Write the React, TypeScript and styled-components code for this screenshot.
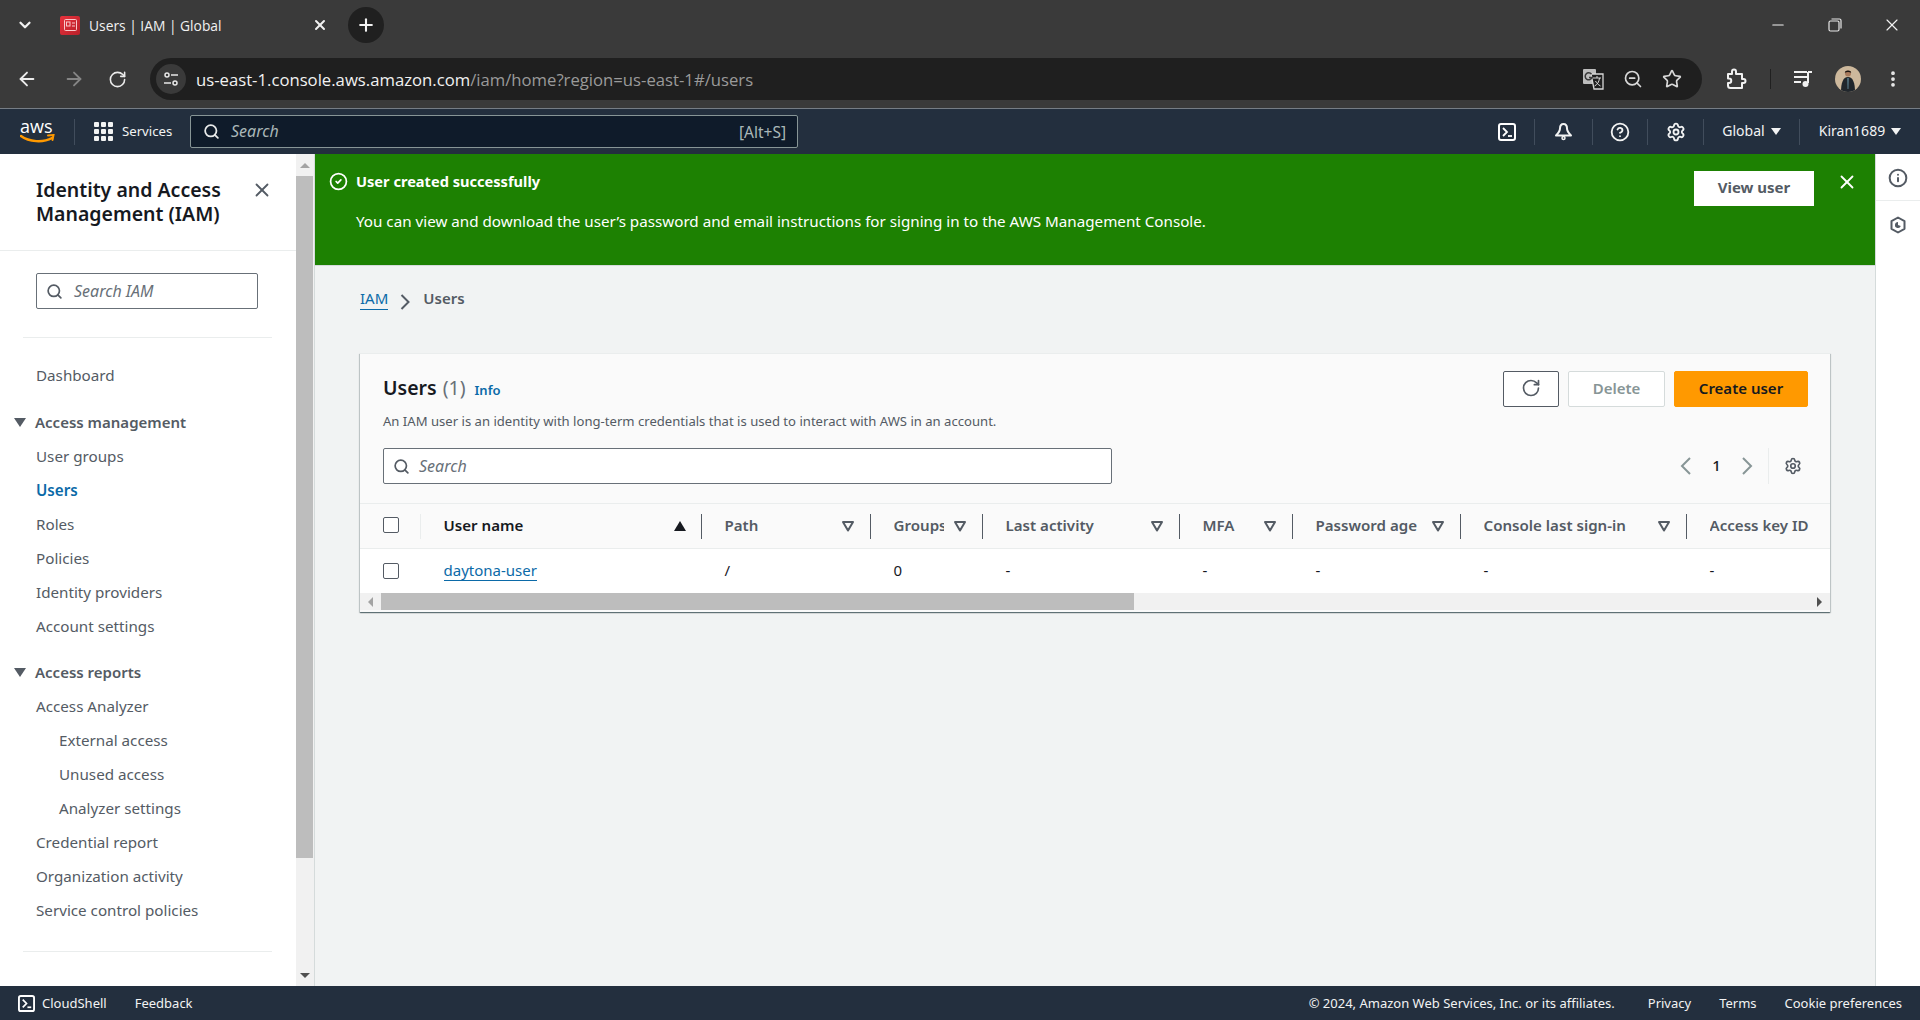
import styled, { createGlobalStyle } from 'styled-components';
import {
  ArrowLeft,
  ArrowRight,
  ChevronDown,
  CircleCheck,
  CircleHelp,
  Info,
  Minus,
  MoreVertical,
  Plus,
  RotateCw,
  Search,
  Settings,
  Star,
  X,
  ZoomOut,
} from 'lucide-react';

const GlobalStyle = createGlobalStyle`
  html, body {
    margin: 0;
    padding: 0;
    height: 100%;
    overflow: hidden;
  }
  #root {
    height: 100%;
  }
  * {
    box-sizing: border-box;
  }
`;

const uiFont = `"Noto Sans", "Open Sans", Arial, sans-serif`;
const chromeFont = `"Open Sans", "Noto Sans", Arial, sans-serif`;

const AppContainer = styled.div`
  display: flex;
  flex-direction: column;
  width: 1920px;
  height: 1020px;
  overflow: hidden;
  background: #f1f3f3;
  font-family: ${uiFont};
  color: #16191f;
`;

/* browser chrome */
const TabStrip = styled.div`
  display: flex;
  align-items: center;
  height: 54px;
  padding-bottom: 4px;
  background: #3a3a3a;
  color: #f1f1f1;
  font-family: ${chromeFont};
`;

const TabListButton = styled.div`
  width: 50px;
  display: flex;
  justify-content: center;
`;

const Favicon = styled.div`
  width: 20px;
  height: 19px;
  margin-left: 10px;
  border-radius: 2px;
  background: linear-gradient(135deg, #e7323c, #b8202a);
  display: flex;
  align-items: center;
  justify-content: center;
`;

const TabTitle = styled.div`
  width: 223px;
  margin-left: 9px;
  font-size: 13.8px;
  white-space: nowrap;
`;

const NewTabButton = styled.div`
  width: 36px;
  height: 36px;
  margin-left: 20px;
  border-radius: 50%;
  background: #202020;
  display: flex;
  align-items: center;
  justify-content: center;
`;

const WindowControls = styled.div`
  margin-left: auto;
  display: flex;
  align-items: center;
`;

const WindowButton = styled.div`
  width: 57px;
  display: flex;
  justify-content: center;
`;

const BrowserToolbar = styled.div`
  display: flex;
  align-items: center;
  height: 55px;
  padding-bottom: 4px;
  background: #3a3a3a;
  border-bottom: 1px solid #767d85;
  color: #e8e8e8;
`;

const ToolbarButton = styled.div<{ $w: number; $dim?: boolean }>`
  width: ${(p) => p.$w}px;
  display: flex;
  justify-content: center;
  align-items: center;
  color: ${(p) => (p.$dim ? '#858585' : '#ececec')};
`;

const AddressBar = styled.div`
  width: 1552px;
  height: 42px;
  margin-left: 9px;
  padding: 0 20px 0 6px;
  border-radius: 21px;
  background: #1f1f1f;
  display: flex;
  align-items: center;
  font-family: ${chromeFont};
`;

const SiteButton = styled.div`
  width: 30px;
  height: 30px;
  border-radius: 50%;
  background: #3a3a3a;
  display: flex;
  align-items: center;
  justify-content: center;
`;

const Url = styled.div`
  margin-left: 10px;
  flex: 1;
  font-size: 16.7px;
  color: #f1f1f1;
  white-space: nowrap;
  span {
    color: #9a9a9a;
  }
`;

const AddressIcons = styled.div`
  display: flex;
  align-items: center;
  gap: 19px;
  color: #d8d8d8;
`;

const ToolbarDivider = styled.div`
  width: 1px;
  height: 20px;
  margin-right: 22px;
  background: #202020;
`;

/* aws top nav */
const TopNav = styled.div`
  display: flex;
  align-items: center;
  height: 45px;
  background: #232f3e;
  color: #f2f3f3;
`;

const LogoSlot = styled.div`
  width: 75px;
  height: 26px;
  border-right: 1px solid #414d5c;
  padding-left: 20px;
  display: flex;
  flex-direction: column;
  align-items: flex-start;
`;

const LogoText = styled.div`
  font-family: ${chromeFont};
  font-size: 18px;
  line-height: 15px;
  color: #fff;
`;

const ServicesButton = styled.div`
  width: 115px;
  padding-left: 19px;
  display: flex;
  align-items: center;
  gap: 9px;
  font-size: 13.2px;
`;

const ServicesLabel = styled.span`
  padding-bottom: 2px;
`;

const GridIcon = styled.div`
  display: grid;
  grid-template-columns: repeat(3, 5px);
  grid-auto-rows: 5px;
  gap: 2px;
  i {
    background: #f2f3f3;
    border-radius: 1px;
  }
`;

const NavSearch = styled.div`
  width: 608px;
  height: 33px;
  padding: 0 11px 0 12px;
  border: 1px solid #879596;
  border-radius: 2px;
  background: #0f1b2a;
  display: flex;
  align-items: center;
  gap: 11px;
  font-size: 16px;
  color: #aab7b8;
`;

const NavSearchHint = styled.span`
  margin-left: auto;
  font-size: 15.5px;
`;

const NavSearchPlaceholder = styled.span`
  padding-bottom: 2px;
  font-style: italic;
`;

const NavCells = styled.div`
  margin-left: auto;
  display: flex;
  align-items: center;
`;

const NavCell = styled.div<{ $w: number; $first?: boolean }>`
  width: ${(p) => p.$w}px;
  height: 26px;
  border-left: ${(p) => (p.$first ? 'none' : '1px solid #414d5c')};
  display: flex;
  align-items: center;
  justify-content: center;
  gap: 6px;
  font-size: 14px;
  color: #f2f3f3;
`;

const NavLabel = styled.span`
  padding-bottom: 2px;
`;

const Caret = styled.i`
  width: 0;
  height: 0;
  border-left: 5px solid transparent;
  border-right: 5px solid transparent;
  border-top: 7px solid #f2f3f3;
`;

/* body */
const Body = styled.div`
  display: flex;
  flex: 1;
  min-height: 0;
`;

const SidePanel = styled.div`
  width: 296px;
  background: #fff;
  display: flex;
  flex-direction: column;
`;

const SideHeader = styled.div`
  height: 97px;
  padding: 24px 23px 0 36px;
  border-bottom: 1px solid #eaeded;
  display: flex;
  justify-content: space-between;
  align-items: flex-start;
`;

const SideTitle = styled.div`
  width: 200px;
  font-size: 19.5px;
  line-height: 24px;
  font-weight: 600;
`;

const SideClose = styled.div`
  margin-top: 1px;
  color: #545b64;
`;

const SideSearchWrap = styled.div`
  padding: 22px 38px 28px 36px;
`;

const SearchField = styled.div<{ $w?: number; $gap: number; $pad: number }>`
  width: ${(p) => (p.$w ? `${p.$w}px` : '100%')};
  height: 36px;
  padding-left: ${(p) => p.$pad}px;
  border: 1px solid #687078;
  border-radius: 2px;
  background: #fff;
  display: flex;
  align-items: center;
  gap: ${(p) => p.$gap}px;
  font-size: 16px;
  font-style: italic;
  color: #687078;
`;

const SideDivider = styled.div<{ $mt?: number }>`
  height: 1px;
  margin: ${(p) => p.$mt ?? 0}px 24px 0 23px;
  background: #eaeded;
`;

const SideNav = styled.div`
  padding-top: 20px;
`;

const SideItem = styled.div<{ $indent?: boolean; $active?: boolean }>`
  height: 34px;
  padding-left: ${(p) => (p.$indent ? 59 : 36)}px;
  display: flex;
  align-items: center;
  font-size: 15.2px;
  font-weight: ${(p) => (p.$active ? 600 : 400)};
  color: ${(p) => (p.$active ? '#0b6aa8' : '#545b64')};
  white-space: nowrap;
`;

const SideGroup = styled.div<{ $mt: number }>`
  height: 34px;
  margin-top: ${(p) => p.$mt}px;
  padding-left: 14px;
  display: flex;
  align-items: center;
  gap: 9px;
  font-size: 15px;
  font-weight: 600;
  color: #545b64;
`;

const GroupCaret = styled.i`
  width: 0;
  height: 0;
  border-left: 6px solid transparent;
  border-right: 6px solid transparent;
  border-top: 9px solid #545b64;
`;

const ScrollColumn = styled.div`
  width: 19px;
  background: #f1f1f1;
  border-right: 1px solid #d5dbdb;
  display: flex;
  flex-direction: column;
`;

const ScrollArrow = styled.div<{ $h: number; $down?: boolean }>`
  height: ${(p) => p.$h}px;
  display: flex;
  justify-content: center;
  align-items: center;
  &::after {
    content: '';
    width: 0;
    height: 0;
    border-left: 5px solid transparent;
    border-right: 5px solid transparent;
    ${(p) => (p.$down ? 'border-top: 5px solid #505050;' : 'border-bottom: 5px solid #a3a3a3;')}
  }
`;

const ScrollThumb = styled.div`
  height: 682px;
  margin-right: 1px;
  background: #bdbdbd;
`;

const ScrollRest = styled.div`
  flex: 1;
`;

const Main = styled.div`
  width: 1560px;
  display: flex;
  flex-direction: column;
`;

const FlashBar = styled.div`
  height: 112px;
  padding: 14px 17px 0 14px;
  background: #1d8102;
  color: #fff;
  display: flex;
  align-items: flex-start;
  border-bottom: 1px solid #d5dbdb;
`;

const FlashIcon = styled.div`
  width: 27px;
  padding-top: 4px;
`;

const FlashText = styled.div`
  flex: 1;
  font-size: 15.2px;
`;

const FlashTitle = styled.div`
  font-size: 14.6px;
  font-weight: 700;
  line-height: 26px;
`;

const FlashMessage = styled.div`
  margin-top: 15px;
  line-height: 25px;
`;

const FlashButton = styled.div`
  width: 120px;
  height: 35px;
  margin-top: 3px;
  padding-bottom: 4px;
  background: #fff;
  color: #545b64;
  font-size: 15px;
  font-weight: 700;
  display: flex;
  align-items: center;
  justify-content: center;
`;

const FlashClose = styled.div`
  width: 44px;
  display: flex;
  justify-content: flex-end;
  padding-top: 3px;
`;

const Breadcrumbs = styled.div`
  height: 87px;
  padding: 18px 0 0 45px;
  display: flex;
  align-items: flex-start;
  font-size: 15px;
  line-height: 28px;
`;

const CrumbLink = styled.a`
  color: #0b6aa8;
  line-height: 22px;
  margin-top: 3px;
  border-bottom: 1px solid #0b6aa8;
`;

const CrumbChevron = styled.div`
  width: 35px;
  padding: 6px 0 0 12px;
`;

const CrumbCurrent = styled.span`
  color: #545b64;
  font-weight: 600;
`;

const Card = styled.div`
  width: 1470px;
  height: 259px;
  margin-left: 45px;
  background: #fafafa;
  border-top: 1px solid #eaeded;
  box-shadow: 0 1px 1px 0 rgba(0, 28, 36, 0.45), 1px 1px 1px 0 rgba(0, 28, 36, 0.15),
    -1px 1px 1px 0 rgba(0, 28, 36, 0.15);
  display: flex;
  flex-direction: column;
`;

const CardTop = styled.div`
  height: 149px;
  padding: 17px 22px 0 23px;
  display: grid;
  grid-template-columns: 1fr auto;
  grid-template-rows: 77px 36px;
`;

const CardHeading = styled.div`
  display: flex;
  flex-direction: column;
`;

const TitleRow = styled.div`
  display: flex;
  align-items: baseline;
  height: 34px;
  font-size: 19.5px;
  line-height: 34px;
`;

const TitleText = styled.span`
  font-weight: 600;
`;

const TitleCount = styled.span`
  margin-left: 6px;
  color: #687078;
`;

const InfoLink = styled.a`
  margin-left: 9px;
  font-size: 13px;
  font-weight: 600;
  color: #0b6aa8;
`;

const CardDescription = styled.div`
  margin-top: 6px;
  font-size: 13.1px;
  line-height: 20px;
  color: #545b64;
`;

const Actions = styled.div`
  display: flex;
  gap: 9px;
  align-items: flex-start;
`;

const ActionButton = styled.div<{ $w: number; $kind: 'normal' | 'disabled' | 'primary' }>`
  width: ${(p) => p.$w}px;
  height: 36px;
  padding-bottom: 2px;
  border-radius: 2px;
  display: flex;
  align-items: center;
  justify-content: center;
  font-size: 15px;
  font-weight: 600;
  border: 1px solid
    ${(p) => (p.$kind === 'normal' ? '#545b64' : p.$kind === 'disabled' ? '#d5dbdb' : '#ff9900')};
  background: ${(p) => (p.$kind === 'primary' ? '#ff9900' : '#fff')};
  color: ${(p) => (p.$kind === 'disabled' ? '#879596' : p.$kind === 'primary' ? '#16191f' : '#545b64')};
`;

const Pager = styled.div`
  display: flex;
  align-items: center;
  justify-content: flex-end;
  height: 36px;
  padding-right: 6px;
`;

const PagerNumber = styled.div`
  width: 49px;
  padding-bottom: 2px;
  text-align: center;
  font-size: 15px;
  font-weight: 500;
`;

const PagerGear = styled.div`
  margin-left: 15px;
  height: 36px;
  padding-left: 15px;
  border-left: 1px solid #eaeded;
  display: flex;
  align-items: center;
  color: #545b64;
`;

const Row = styled.div<{ $head?: boolean }>`
  display: grid;
  grid-template-columns: 61px 281px 169px 112px 197px 113px 168px 226px 143px;
  height: ${(p) => (p.$head ? 46 : 44)}px;
  align-items: center;
  background: ${(p) => (p.$head ? '#fafafa' : '#fff')};
  border-top: ${(p) => (p.$head ? '1px solid #eaeded' : 'none')};
  border-bottom: ${(p) => (p.$head ? '1px solid #eaeded' : 'none')};
`;

const CheckCell = styled.div<{ $head?: boolean }>`
  height: 25px;
  padding: ${(p) => (p.$head ? '0 0 2px 23px' : '0 0 0 23px')};
  display: flex;
  align-items: center;
  border-right: ${(p) => (p.$head ? '1px solid #eaeded' : 'none')};
`;

const Check = styled.div`
  width: 16px;
  height: 16px;
  border: 1px solid #545b64;
  border-radius: 2px;
  background: #fff;
`;

const HeadCell = styled.div<{ $last?: boolean; $sorted?: boolean }>`
  height: 25px;
  padding: 0 15px 0 22.5px;
  display: flex;
  align-items: center;
  gap: 9px;
  font-size: 15.1px;
  font-weight: 600;
  color: ${(p) => (p.$sorted ? '#16191f' : '#545b64')};
  border-right: ${(p) => (p.$last ? 'none' : '1px solid #545b64')};
`;

const HeadLabel = styled.div`
  flex: 1;
  min-width: 0;
  padding-bottom: 3px;
  overflow: hidden;
  white-space: nowrap;
`;

const BodyCell = styled.div`
  padding: 0 0 2px 22.5px;
  font-size: 15px;
  color: #16191f;
`;

const UserLink = styled.a`
  color: #0b6aa8;
  border-bottom: 1px solid #0b6aa8;
`;

const HScroll = styled.div`
  height: 17px;
  background: #f1f1f1;
  display: grid;
  grid-template-columns: 21px 753px 1fr 21px;
`;

const HArrow = styled.div<{ $right?: boolean }>`
  display: flex;
  align-items: center;
  justify-content: center;
  &::after {
    content: '';
    width: 0;
    height: 0;
    border-top: 5px solid transparent;
    border-bottom: 5px solid transparent;
    ${(p) => (p.$right ? 'border-left: 5px solid #505050;' : 'border-right: 5px solid #a3a3a3;')}
  }
`;

const HThumb = styled.div`
  background: #bdbdbd;
`;

const Rail = styled.div`
  width: 45px;
  background: #fff;
  border-left: 1px solid #d5dbdb;
  display: flex;
  flex-direction: column;
  color: #545b64;
`;

const RailItem = styled.div<{ $line?: boolean }>`
  height: 47px;
  padding-top: ${(p) => (p.$line ? 2 : 0)}px;
  display: flex;
  align-items: center;
  justify-content: center;
  border-bottom: ${(p) => (p.$line ? '1px solid #eaeded' : 'none')};
`;

const Footer = styled.div`
  height: 34px;
  padding: 0 18px;
  background: #232f3e;
  color: #f2f3f3;
  font-size: 13px;
  display: flex;
  align-items: center;
`;

const FooterShell = styled.div`
  display: flex;
  align-items: center;
  gap: 7px;
`;

const FooterFeedback = styled.div`
  margin-left: 28px;
`;

const FooterLinks = styled.div`
  margin-left: auto;
  display: flex;
  gap: 28px;
`;

const Copyright = styled.div`
  margin-right: 5px;
`;

const ShellIcon = ({ size }: { size: number }) => (
  <svg width={size} height={size} viewBox="0 0 18 18" fill="none">
    <rect x="1" y="1" width="16" height="16" rx="2" stroke="#fff" strokeWidth="2" />
    <path d="M5 5l4 4-4 4" stroke="#fff" strokeWidth="1.8" />
    <path d="M10 13h4" stroke="#fff" strokeWidth="1.8" />
  </svg>
);

const BellIcon = () => (
  <svg width="19" height="19" viewBox="0 0 19 19" fill="none" stroke="#f2f3f3" strokeWidth="2">
    <path d="M9.5 2C7 2 6 4 6 6.500 6 9 4 11.500 2 13.500h15c-2-2-4-4.500-4-7C13 4 12 2 9.500 2z" strokeLinejoin="round" />
    <circle cx="9.500" cy="16" r="1.500" strokeWidth="1.500" />
  </svg>
);

const FilterCaret = () => (
  <svg width="14" height="12" viewBox="0 0 14 12" fill="none">
    <path d="M2 2h10L7 10.5z" stroke="#545b64" strokeWidth="2" strokeLinejoin="round" />
  </svg>
);

const SortCaret = () => (
  <svg width="12" height="10" viewBox="0 0 12 10">
    <path d="M6 0l6 10H0z" fill="#16191f" />
  </svg>
);

const PagerChevron = ({ right }: { right?: boolean }) => (
  <svg width="12" height="18" viewBox="0 0 12 18" fill="none">
    <path d={right ? 'M2 1l8 8-8 8' : 'M10 1L2 9l8 8'} stroke="#879596" strokeWidth="2" />
  </svg>
);

const Avatar = () => (
  <svg width="26" height="26" viewBox="0 0 26 26">
    <defs>
      <clipPath id="avatar-clip">
        <circle cx="13" cy="13" r="13" />
      </clipPath>
    </defs>
    <g clipPath="url(#avatar-clip)">
      <rect width="26" height="26" fill="#cdb89c" />
      <path d="M6 26c0-9 2-15 7-15s7 6 7 15z" fill="#20262c" />
      <path d="M12 12h2l-.4 11h-1.200z" fill="#4c6a78" />
      <circle cx="13" cy="7.500" r="3" fill="#a87a5c" />
      <path d="M9.800 6.800c0-3 6.400-3 6.400 0-2-1-4.400-1-6.400 0z" fill="#1a1512" />
    </g>
  </svg>
);

const PuzzleIcon = () => (
  <svg width="22" height="22" viewBox="0 0 22 22" fill="none">
    <path
      d="M3 6h4V3.500a2 2 0 0 1 4 0V6h6v5h1.500a2 2 0 0 1 0 4H17v5H5.500C4.100 20 3 19 3 17.500V15h1a2.200 2.200 0 0 0 0-4.500H3z"
      stroke="#f1f1f1"
      strokeWidth="2"
      strokeLinejoin="round"
    />
  </svg>
);

const MediaIcon = () => (
  <svg width="20" height="20" viewBox="0 0 20 20" fill="none">
    <path d="M1 3h13M1 8h13M1 13h7" stroke="#f1f1f1" strokeWidth="2" />
    <path d="M15 3v11" stroke="#f1f1f1" strokeWidth="2" />
    <path d="M15 3h4" stroke="#f1f1f1" strokeWidth="2" />
    <circle cx="12.500" cy="15" r="3" fill="#f1f1f1" />
  </svg>
);

const TranslateIcon = () => (
  <svg width="22" height="22" viewBox="0 0 22 22" fill="none">
    <rect x="1" y="1" width="13" height="15" rx="1" fill="#bdbdbd" />
    <path d="M9 6h12v15H12z" fill="#1f1f1f" stroke="#d8d8d8" strokeWidth="1.300" />
    <path d="M11 10h8M15 8v2M12.500 18c3-1.500 4.500-4 5-8M13.500 13c1 2 2.500 3.500 5 5" stroke="#d8d8d8" strokeWidth="1" />
    <path d="M9.500 6.200a3.500 3.500 0 1 0 .5 3.300H7" stroke="#3a3a3a" strokeWidth="1.500" />
  </svg>
);

const TuneIcon = () => (
  <svg width="16" height="16" viewBox="0 0 16 16" fill="none" stroke="#e8e8e8" strokeWidth="1.500">
    <circle cx="4" cy="4" r="2" />
    <path d="M8 4h7M1 12h7" />
    <circle cx="12" cy="12" r="2" />
  </svg>
);

const RestoreIcon = () => (
  <svg width="14" height="14" viewBox="0 0 14 14" fill="none" stroke="#e8e8e8" strokeWidth="1.200">
    <rect x="1" y="3" width="10" height="10" rx="1.500" />
    <path d="M3.500 1h8A1.500 1.500 0 0 1 13 2.500v8" />
  </svg>
);

const HexIcon = () => (
  <svg width="18" height="18" viewBox="0 0 18 18" fill="none">
    <path d="M9 1.500l6.500 3.700v7.600L9 16.500l-6.500-3.700V5.200z" stroke="#545b64" strokeWidth="2" strokeLinejoin="round" />
    <path d="M9 6a3 3 0 1 0 2.800 4L9 9z" fill="#545b64" />
  </svg>
);

const AwsSmile = () => (
  <svg width="36" height="11" viewBox="0 0 36 11" fill="none">
    <path d="M1 2c8 6 22 7 31 2" stroke="#ff9900" strokeWidth="2.400" strokeLinecap="round" />
    <path d="M28 1.500l5.500-.5-1 5" stroke="#ff9900" strokeWidth="2" strokeLinecap="round" />
  </svg>
);

const columns = ['Path', 'Groups', 'Last activity', 'MFA', 'Password age', 'Console last sign-in'];
const cells = ['/', '0', '-', '-', '-', '-', '-'];

const App = () => {
  return (
    <AppContainer>
      <GlobalStyle />
      <TabStrip>
        <TabListButton>
          <ChevronDown size={18} strokeWidth={3} />
        </TabListButton>
        <Favicon>
          <svg width="13" height="12" viewBox="0 0 13 12" fill="none" stroke="#f8c9cc" strokeWidth="1">
            <rect x="0.500" y="0.500" width="12" height="11" rx="1" />
            <rect x="2.500" y="3" width="3.500" height="4" />
            <path d="M8 4h3M8 7h3" />
          </svg>
        </Favicon>
        <TabTitle>Users | IAM | Global</TabTitle>
        <X size={16} strokeWidth={3} />
        <NewTabButton>
          <Plus size={20} strokeWidth={2.5} />
        </NewTabButton>
        <WindowControls>
          <WindowButton>
            <Minus size={18} strokeWidth={1.4} />
          </WindowButton>
          <WindowButton>
            <RestoreIcon />
          </WindowButton>
          <WindowButton>
            <X size={20} strokeWidth={1.4} />
          </WindowButton>
        </WindowControls>
      </TabStrip>
      <BrowserToolbar>
        <ToolbarButton $w={54}>
          <ArrowLeft size={22} />
        </ToolbarButton>
        <ToolbarButton $w={39} $dim>
          <ArrowRight size={22} />
        </ToolbarButton>
        <ToolbarButton $w={48}>
          <RotateCw size={19} />
        </ToolbarButton>
        <AddressBar>
          <SiteButton>
            <TuneIcon />
          </SiteButton>
          <Url>
            us-east-1.console.aws.amazon.com<span>/iam/home?region=us-east-1#/users</span>
          </Url>
          <AddressIcons>
            <TranslateIcon />
            <ZoomOut size={20} />
            <Star size={20} />
          </AddressIcons>
        </AddressBar>
        <ToolbarButton $w={68}>
          <PuzzleIcon />
        </ToolbarButton>
        <ToolbarDivider />
        <ToolbarButton $w={20}>
          <MediaIcon />
        </ToolbarButton>
        <ToolbarButton $w={70}>
          <Avatar />
        </ToolbarButton>
        <ToolbarButton $w={20}>
          <MoreVertical size={22} strokeWidth={2.5} />
        </ToolbarButton>
      </BrowserToolbar>
      <TopNav>
        <LogoSlot>
          <LogoText>aws</LogoText>
          <AwsSmile />
        </LogoSlot>
        <ServicesButton>
          <GridIcon>
            {Array.from({ length: 9 }).map((_, i) => (
              <i key={i} />
            ))}
          </GridIcon>
          <ServicesLabel>Services</ServicesLabel>
        </ServicesButton>
        <NavSearch>
          <Search size={17} strokeWidth={2.5} color="#e8eaea" />
          <NavSearchPlaceholder>Search</NavSearchPlaceholder>
          <NavSearchHint>[Alt+S]</NavSearchHint>
        </NavSearch>
        <NavCells>
          <NavCell $w={54} $first>
            <ShellIcon size={18} />
          </NavCell>
          <NavCell $w={58}>
            <BellIcon />
          </NavCell>
          <NavCell $w={55}>
            <CircleHelp size={20} strokeWidth={2.2} />
          </NavCell>
          <NavCell $w={56}>
            <Settings size={20} strokeWidth={2.2} />
          </NavCell>
          <NavCell $w={96}>
            <NavLabel>Global</NavLabel>
            <Caret />
          </NavCell>
          <NavCell $w={121}>
            <NavLabel>Kiran1689</NavLabel>
            <Caret />
          </NavCell>
        </NavCells>
      </TopNav>
      <Body>
        <SidePanel>
          <SideHeader>
            <SideTitle>Identity and Access Management (IAM)</SideTitle>
            <SideClose>
              <X size={22} strokeWidth={2} />
            </SideClose>
          </SideHeader>
          <SideSearchWrap>
            <SearchField $gap={11} $pad={9}>
              <Search size={17} strokeWidth={2.4} color="#545b64" />
              Search IAM
            </SearchField>
          </SideSearchWrap>
          <SideDivider />
          <SideNav>
            <SideItem>Dashboard</SideItem>
            <SideGroup $mt={13}>
              <GroupCaret />
              Access management
            </SideGroup>
            <SideItem>User groups</SideItem>
            <SideItem $active>Users</SideItem>
            <SideItem>Roles</SideItem>
            <SideItem>Policies</SideItem>
            <SideItem>Identity providers</SideItem>
            <SideItem>Account settings</SideItem>
            <SideGroup $mt={12}>
              <GroupCaret />
              Access reports
            </SideGroup>
            <SideItem>Access Analyzer</SideItem>
            <SideItem $indent>External access</SideItem>
            <SideItem $indent>Unused access</SideItem>
            <SideItem $indent>Analyzer settings</SideItem>
            <SideItem>Credential report</SideItem>
            <SideItem>Organization activity</SideItem>
            <SideItem>Service control policies</SideItem>
          </SideNav>
          <SideDivider $mt={24} />
        </SidePanel>
        <ScrollColumn>
          <ScrollArrow $h={22} />
          <ScrollThumb />
          <ScrollRest />
          <ScrollArrow $h={22} $down />
        </ScrollColumn>
        <Main>
          <FlashBar>
            <FlashIcon>
              <CircleCheck size={19} strokeWidth={2.2} />
            </FlashIcon>
            <FlashText>
              <FlashTitle>User created successfully</FlashTitle>
              <FlashMessage>
                You can view and download the user’s password and email instructions for signing in to the AWS
                Management Console.
              </FlashMessage>
            </FlashText>
            <FlashButton>View user</FlashButton>
            <FlashClose>
              <X size={22} strokeWidth={2} />
            </FlashClose>
          </FlashBar>
          <Breadcrumbs>
            <CrumbLink>IAM</CrumbLink>
            <CrumbChevron>
              <svg width="10" height="16" viewBox="0 0 10 16" fill="none">
                <path d="M1.500 1l7 7-7 7" stroke="#545b64" strokeWidth="2" />
              </svg>
            </CrumbChevron>
            <CrumbCurrent>Users</CrumbCurrent>
          </Breadcrumbs>
          <Card>
            <CardTop>
              <CardHeading>
                <TitleRow>
                  <TitleText>Users</TitleText>
                  <TitleCount>(1)</TitleCount>
                  <InfoLink>Info</InfoLink>
                </TitleRow>
                <CardDescription>
                  An IAM user is an identity with long-term credentials that is used to interact with AWS in an
                  account.
                </CardDescription>
              </CardHeading>
              <Actions>
                <ActionButton $w={56} $kind="normal">
                  <RotateCw size={20} strokeWidth={2} />
                </ActionButton>
                <ActionButton $w={97} $kind="disabled">
                  Delete
                </ActionButton>
                <ActionButton $w={134} $kind="primary">
                  Create user
                </ActionButton>
              </Actions>
              <SearchField $w={729} $gap={9} $pad={9}>
                <Search size={17} strokeWidth={2.4} color="#545b64" />
                Search
              </SearchField>
              <Pager>
                <PagerChevron />
                <PagerNumber>1</PagerNumber>
                <PagerChevron right />
                <PagerGear>
                  <Settings size={18} strokeWidth={2.2} />
                </PagerGear>
              </Pager>
            </CardTop>
            <Row $head>
              <CheckCell $head>
                <Check />
              </CheckCell>
              <HeadCell $sorted>
                <HeadLabel>User name</HeadLabel>
                <SortCaret />
              </HeadCell>
              {columns.map((c) => (
                <HeadCell key={c}>
                  <HeadLabel>{c}</HeadLabel>
                  <FilterCaret />
                </HeadCell>
              ))}
              <HeadCell $last>
                <HeadLabel>Access key ID</HeadLabel>
              </HeadCell>
            </Row>
            <Row>
              <CheckCell>
                <Check />
              </CheckCell>
              <BodyCell>
                <UserLink>daytona-user</UserLink>
              </BodyCell>
              {cells.map((c, i) => (
                <BodyCell key={i}>{c}</BodyCell>
              ))}
            </Row>
            <HScroll>
              <HArrow />
              <HThumb />
              <div />
              <HArrow $right />
            </HScroll>
          </Card>
        </Main>
        <Rail>
          <RailItem $line>
            <Info size={20} strokeWidth={2.4} />
          </RailItem>
          <RailItem>
            <HexIcon />
          </RailItem>
        </Rail>
      </Body>
      <Footer>
        <FooterShell>
          <ShellIcon size={17} />
          CloudShell
        </FooterShell>
        <FooterFeedback>Feedback</FooterFeedback>
        <FooterLinks>
          <Copyright>© 2024, Amazon Web Services, Inc. or its affiliates.</Copyright>
          <span>Privacy</span>
          <span>Terms</span>
          <span>Cookie preferences</span>
        </FooterLinks>
      </Footer>
    </AppContainer>
  );
};

export default App;
